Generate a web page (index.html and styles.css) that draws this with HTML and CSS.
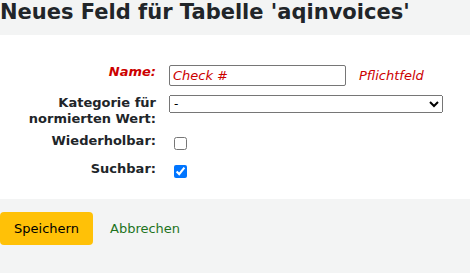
FILE: index.html
```html
<!DOCTYPE html>
<html lang="de">
<head>
<meta charset="utf-8">
<link rel="stylesheet" href="styles.css">
</head>
<body>
<h1 class="title">Neues Feld für Tabelle 'aqinvoices'</h1>
<form class="form">
  <fieldset class="box">
    <ol class="rows">
      <li class="row row-name">
        <label class="lbl required" for="name">Name:</label>
        <input class="text" id="name" type="text" value="Check #">
        <span class="req">Pflichtfeld</span>
      </li>
      <li class="row row-cat">
        <label class="lbl" for="cat">Kategorie für normierten Wert:</label>
        <select class="sel" id="cat"><option>-</option></select>
      </li>
      <li class="row row-rep">
        <label class="lbl" for="rep">Wiederholbar:</label>
        <input class="chk" id="rep" type="checkbox">
      </li>
      <li class="row row-srch">
        <label class="lbl" for="srch">Suchbar:</label>
        <input class="chk" id="srch" type="checkbox" checked>
      </li>
    </ol>
  </fieldset>
  <div class="actions">
    <button class="save" type="button">Speichern</button>
    <a class="cancel" href="#">Abbrechen</a>
  </div>
</form>
</body>
</html>
```
FILE: styles.css
```css
html, body {
  margin: 0;
  padding: 0;
  background: #f3f4f4;
  font-family: "DejaVu Sans", sans-serif;
  color: #212529;
}
.title {
  margin: 0;
  padding: 0;
  height: 35px;
  font-size: 21px;
  font-weight: bold;
  line-height: 24px;
}
.form { margin: 0; }
.box {
  margin: 0;
  border: 0;
  padding: 29px 0 0 0;
  background: #fff;
}
.rows {
  list-style: none;
  margin: 0;
  padding: 0;
  display: flex;
  flex-direction: column;
}
.row {
  display: flex;
  align-items: flex-start;
}
.row-name { padding-bottom: 9px; }
.row-cat { padding-bottom: 6px; }
.row-rep { padding-bottom: 11px; }
.row-srch { padding-bottom: 21px; }
.lbl {
  width: 130px;
  margin-left: 26px;
  margin-right: 13px;
  text-align: right;
  font-size: 13px;
  font-weight: bold;
  line-height: 16px;
}
.lbl.required { color: #cc0000; font-style: italic; }
.text {
  width: 177px;
  height: 21px;
  box-sizing: border-box;
  margin: 1px 0 0 0;
  border: 1px solid #767676;
  border-radius: 2px;
  padding: 0 3px;
  font-family: "DejaVu Sans", sans-serif;
  font-size: 13px;
  font-style: italic;
  color: #cc0000;
}
.req {
  margin-left: 13px;
  font-size: 13px;
  font-style: italic;
  color: #cc0000;
  line-height: 21px;
  margin-top: 1px;
}
.sel {
  width: 274px;
  height: 18px;
  box-sizing: border-box;
  margin: 0;
  font-family: "DejaVu Sans", sans-serif;
  font-size: 12px;
}
.chk {
  margin: 4px 0 0 5px;
  width: 13px;
  height: 13px;
}
.actions {
  display: flex;
  align-items: center;
  padding-top: 13px;
  gap: 17px;
}
.save {
  width: 93px;
  height: 33px;
  border: 0;
  border-radius: 4px;
  background: #ffc107;
  color: #000;
  font-family: "DejaVu Sans", sans-serif;
  font-size: 13px;
  padding: 0;
}
.cancel {
  color: #1d731d;
  text-decoration: none;
  font-size: 13px;
}
```
